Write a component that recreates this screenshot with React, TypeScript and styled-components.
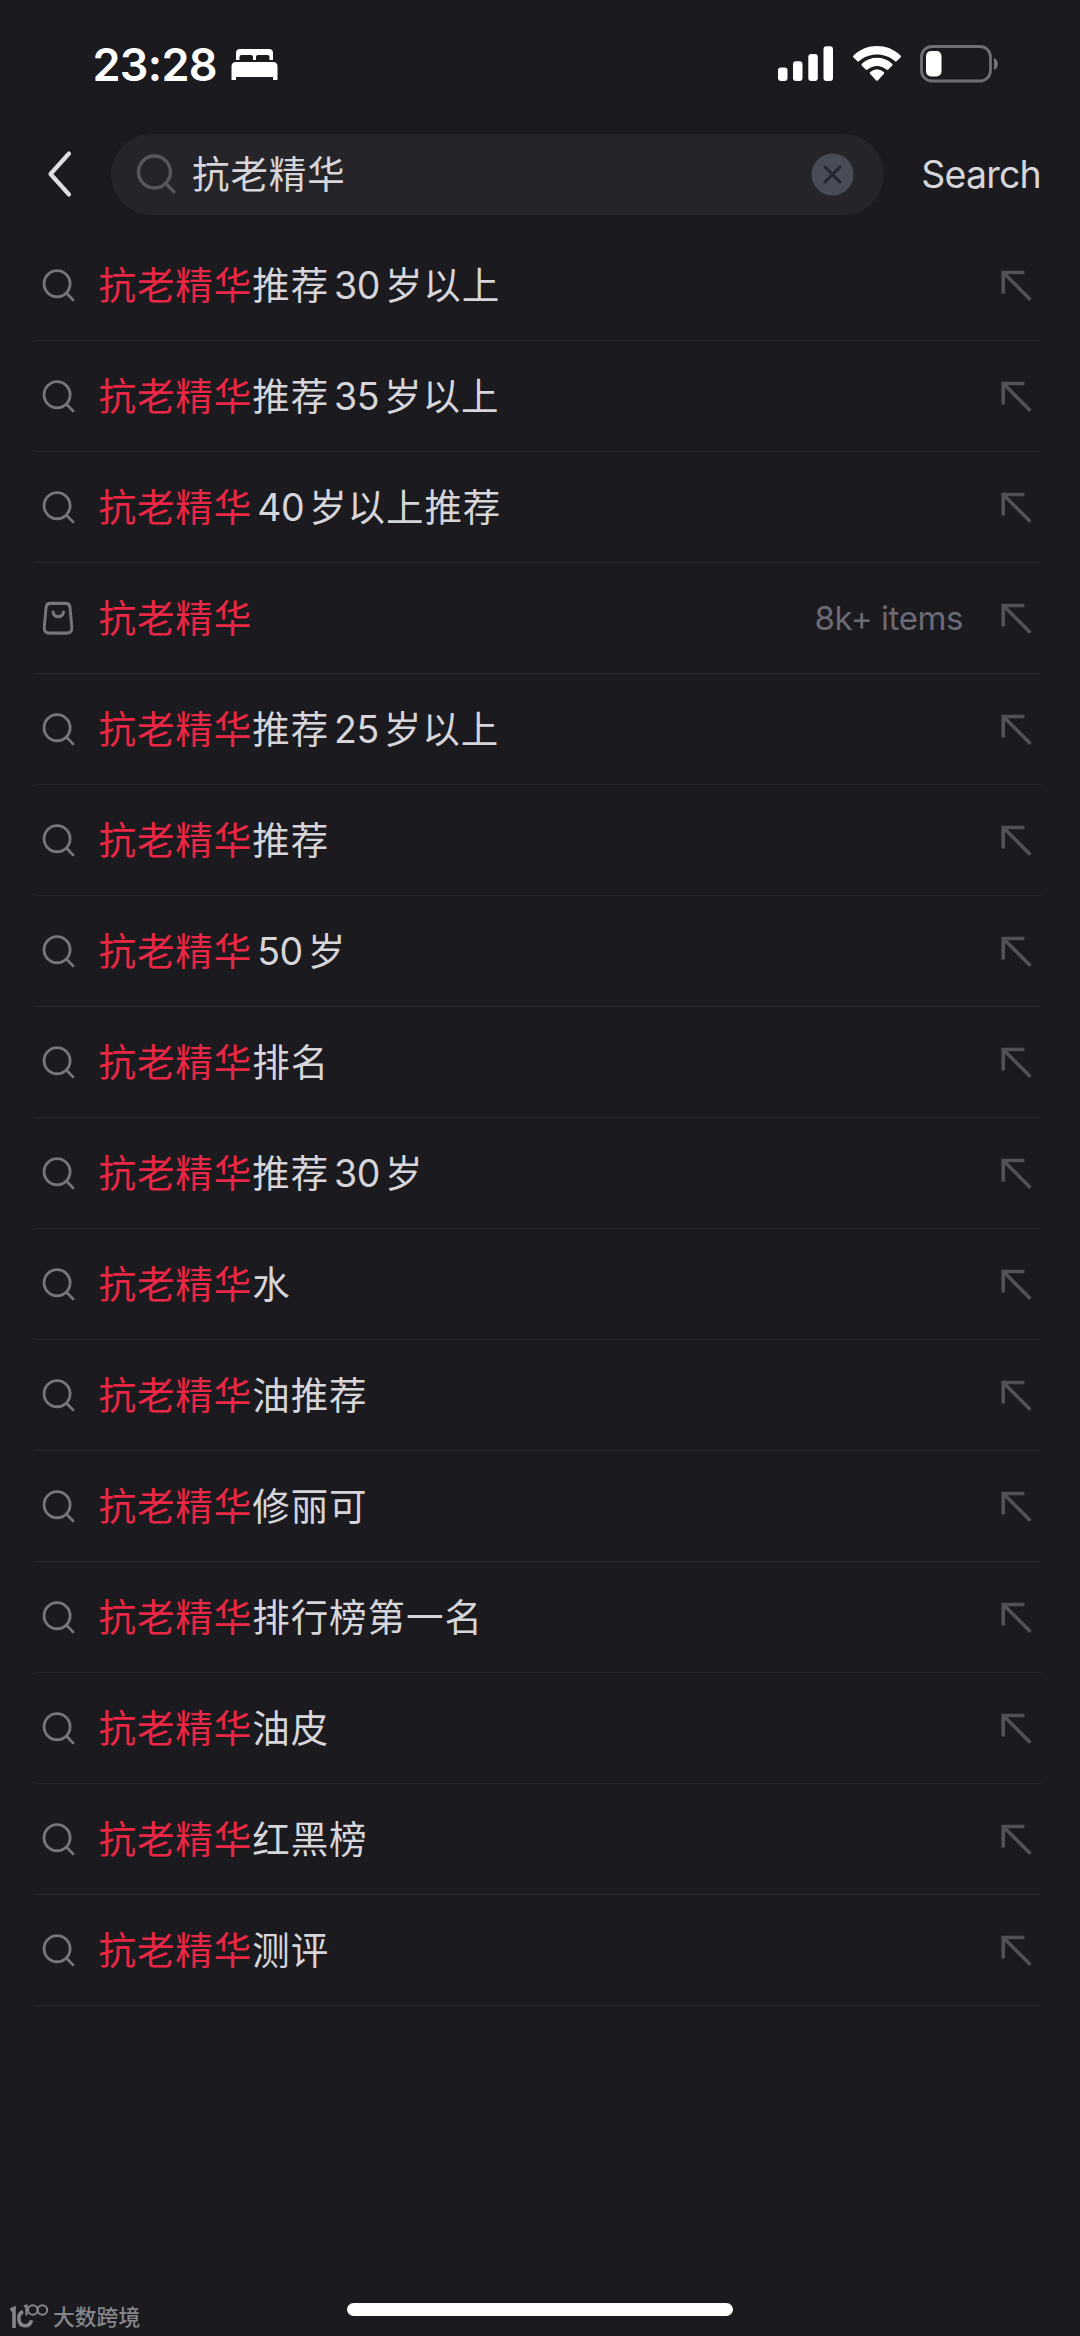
import React from 'react';
import styled, { createGlobalStyle } from 'styled-components';

const GlobalStyle = createGlobalStyle`
  *, *::before, *::after { box-sizing: border-box; }
  html, body { margin: 0; background: #1b1a1f; }
  svg { display: block; flex: none; }
`;

const Screen = styled.main`
  position: relative;
  display: flex;
  flex-direction: column;
  width: 1080px;
  height: 2336px;
  overflow: hidden;
  background: #1b1a1f;
  color: #d5d5da;
  font-family: Inter, 'Noto Sans CJK SC', sans-serif;
`;

const StatusBar = styled.header`
  display: flex;
  justify-content: space-between;
  height: 119px;
  padding: 36px 81.5px 0 92.5px;
  color: #fff;
`;

const StatusGroup = styled.div<{ $gap: number }>`
  display: flex;
  align-items: center;
  gap: ${(p) => p.$gap}px;
  height: 56px;
`;

const Clock = styled.time`
  width: 124px;
  padding-top: 2px;
  font-size: 45px;
  font-weight: 600;
  line-height: 56px;
  letter-spacing: -0.7px;
  white-space: nowrap;
`;

const SearchBar = styled.div`
  display: flex;
  align-items: center;
  height: 110px;
  padding: 0 39px 0 46.5px;
`;

const BackButton = styled.button`
  width: 64.5px;
  padding: 0;
  border: 0;
  background: none;
  color: inherit;
`;

const Field = styled.div`
  display: flex;
  align-items: center;
  width: 773px;
  height: 81px;
  padding: 0 30px 0 25px;
  border-radius: 41px;
  background: #252529;
`;

const Query = styled.span`
  flex: 1;
  margin-left: 15px;
  padding-top: 2px;
  font-size: 37.5px;
  line-height: 56px;
  letter-spacing: 0.9px;
`;

const SearchButton = styled.button`
  flex: 1;
  padding: 1px 0 0;
  border: 0;
  background: none;
  color: inherit;
  font: 400 37.5px/56px Inter, sans-serif;
  letter-spacing: -0.8px;
  text-align: right;
  white-space: nowrap;
`;

const List = styled.ul`
  margin: 0;
  padding: 1px 39px 0 36px;
  list-style: none;
`;

const Row = styled.li`
  display: flex;
  align-items: center;
  height: 111px;
  padding: 0 9px 0 5px;
  border-bottom: 1px solid #29292d;
`;

const IconSlot = styled.span`
  display: flex;
  width: 36px;
  padding: 1px 0 0 1px;
`;

const Label = styled.span`
  flex: 1;
  margin-left: 21.5px;
  padding-top: 2px;
  font-size: 37.5px;
  line-height: 56px;
  letter-spacing: 0.93px;
  white-space: nowrap;
`;

const Match = styled.span`
  color: #ea2744;
`;

const Digits = styled.span`
  margin: 0 5px;
  letter-spacing: -0.5px;
`;

const Count = styled.span`
  margin-right: 35px;
  color: #6c6b75;
  font-size: 33px;
  line-height: 48px;
  letter-spacing: -0.4px;
`;

const HomeIndicator = styled.div`
  width: 386px;
  height: 13px;
  margin: auto auto 20px;
  border-radius: 7px;
  background: #fff;
`;

const Watermark = styled.div`
  position: absolute;
  left: 10px;
  bottom: 7px;
  display: flex;
  align-items: flex-end;
  gap: 3px;
  color: #85858a;
  font-size: 21.8px;
  font-weight: 500;
  line-height: 24px;
`;

const Magnifier = ({ size, color }: { size: number; color: string }) => (
  <svg width={size} height={size} viewBox="0 0 36 36" fill="none" stroke={color} strokeWidth="3" strokeLinecap="round">
    <circle cx="16.2" cy="15.8" r="14" />
    <path d="M26.300 26l7 7.200" />
  </svg>
);

const Bag = () => (
  <svg width="33" height="35" viewBox="0 0 36 36" preserveAspectRatio="none" fill="none" stroke="#77767c" strokeWidth="3.2" strokeLinecap="round" strokeLinejoin="round">
    <path d="M9 2.400h17q4 0 4.500 4l2 20.300q.500 6.300-5 6.300H7.500q-5.500 0-5-6.300l2-20.300q.500-4 4.500-4Z" />
    <path d="M12 11.400c1.200 6.200 10.300 6.200 11.500 0" />
  </svg>
);

const InsertArrow = () => (
  <svg width="34" height="34" viewBox="0 0 34 34" fill="none" stroke="#525157" strokeWidth="3.6">
    <path d="M26.400 4.500H5.200v21M5.200 4.500l27.200 27.200" />
  </svg>
);

const Bed = () => (
  <svg width="47" height="33" viewBox="0 0 47 33" fill="#fff">
    <path d="M5 12V5Q5 1 9 1h29q4 0 4 4v7h-3.500V9q0-2-2-2H27q-2 0-2 2v3h-3V9q0-2-2-2h-9.500q-2 0-2 2v3Z" />
    <path d="M5 14h37q4.500 0 4.500 4.500V32h-4.500v-3H5v3H.500V18.500Q.500 14 5 14Z" />
  </svg>
);

const Signal = () => (
  <svg width="56" height="36" viewBox="0 0 56 36" fill="#fff">
    <rect x="0" y="21.500" width="9.500" height="13.500" rx="3" />
    <rect x="15" y="15.300" width="9.500" height="19.700" rx="3" />
    <rect x="30.300" y="8" width="9.500" height="27" rx="3" />
    <rect x="45.500" y=".3" width="9.500" height="34.700" rx="3" />
  </svg>
);

const Wifi = () => (
  <svg width="50" height="36" viewBox="0 0 50 36" fill="#fff">
    <path d="M1.500 9.400C14.700-3.100 35.300-3.100 48.500 9.400q1 1 0 2l-3.700 3.700q-1 1-2 0C33.100 6.200 16.900 6.200 7.200 15.100q-1 1-2 0L1.500 11.400q-1-1 0-2Z" />
    <path d="M9.900 17.700c8.500-7.900 21.700-7.900 30.200 0q1 1 0 2l-3.800 3.700q-1 .9-2 0c-5.300-4.700-13.300-4.700-18.600 0q-1 .9-2 0l-3.800-3.700q-1-1 0-2Z" />
    <path d="M18.200 26q6.800-5.600 13.600 0 1 1 0 2l-5.800 6.300q-1 1-2 0L18.200 28q-1-1 0-2Z" />
  </svg>
);

const Battery = () => (
  <svg width="79" height="38" viewBox="0 0 79 38">
    <rect x="1.500" y="1.500" width="69" height="34.500" rx="10.500" fill="none" stroke="#707074" strokeWidth="2.800" />
    <rect x="6" y="6" width="15.500" height="25.500" rx="5" fill="#fff" />
    <path d="M74 13c5 1.500 5 10.500 0 12Z" fill="#77777b" />
  </svg>
);

const Chevron = () => (
  <svg width="26" height="50" viewBox="0 0 26 50" fill="none" stroke="#dedee3" strokeWidth="4.200" strokeLinecap="round" strokeLinejoin="round">
    <path d="M22 4.500L3.500 25 22 45.500" />
  </svg>
);

const Clear = () => (
  <svg width="43" height="43" viewBox="0 0 43 43">
    <circle cx="21.500" cy="21.500" r="21" fill="#484c57" />
    <path d="M14 14l15 15M29 14L14 29" stroke="#24252d" strokeWidth="3" strokeLinecap="round" />
  </svg>
);

const BrandMark = () => (
  <svg width="40" height="26" viewBox="0 0 40 26" fill="none" stroke="#85858a">
    <path d="M.500 7L4 5.500V25" strokeWidth="3.600" />
    <path d="M13 8.500C6.500 11.500 8 22.500 15 22.800q5 .3 6.500-5.500" strokeWidth="3.600" />
    <path d="M14 3.500L16.500 2.500v10" strokeWidth="2.200" />
    <circle cx="22.800" cy="7" r="4.800" strokeWidth="2" />
    <circle cx="32.400" cy="7" r="4.800" strokeWidth="2" />
  </svg>
);

const TERM = '抗老精华';

type Suggestion = { rest: string; count?: string };

const suggestions: Suggestion[] = [
  { rest: '推荐30岁以上' },
  { rest: '推荐35岁以上' },
  { rest: '40岁以上推荐' },
  { rest: '', count: '8k+ items' },
  { rest: '推荐25岁以上' },
  { rest: '推荐' },
  { rest: '50岁' },
  { rest: '排名' },
  { rest: '推荐30岁' },
  { rest: '水' },
  { rest: '油推荐' },
  { rest: '修丽可' },
  { rest: '排行榜第一名' },
  { rest: '油皮' },
  { rest: '红黑榜' },
  { rest: '测评' },
];

const spaced = (text: string) =>
  text.split(/(\d+)/).map((part, i) => (/^\d+$/.test(part) ? <Digits key={i}>{part}</Digits> : part));

export default function App() {
  return (
    <Screen lang="zh-CN">
      <GlobalStyle />
      <StatusBar>
        <StatusGroup $gap={14}>
          <Clock>23:28</Clock>
          <Bed />
        </StatusGroup>
        <StatusGroup $gap={18}>
          <Signal />
          <Wifi />
          <Battery />
        </StatusGroup>
      </StatusBar>
      <SearchBar>
        <BackButton aria-label="Back">
          <Chevron />
        </BackButton>
        <Field>
          <Magnifier size={41} color="#57565b" />
          <Query>{TERM}</Query>
          <Clear />
        </Field>
        <SearchButton>Search</SearchButton>
      </SearchBar>
      <List>
        {suggestions.map((s) => (
          <Row key={s.rest}>
            <IconSlot>{s.count ? <Bag /> : <Magnifier size={33.5} color="#77767c" />}</IconSlot>
            <Label>
              <Match>{TERM}</Match>
              {spaced(s.rest)}
            </Label>
            {s.count && <Count>{s.count}</Count>}
            <InsertArrow />
          </Row>
        ))}
      </List>
      <HomeIndicator />
      <Watermark>
        <BrandMark />
        <span>大数跨境</span>
      </Watermark>
    </Screen>
  );
}
